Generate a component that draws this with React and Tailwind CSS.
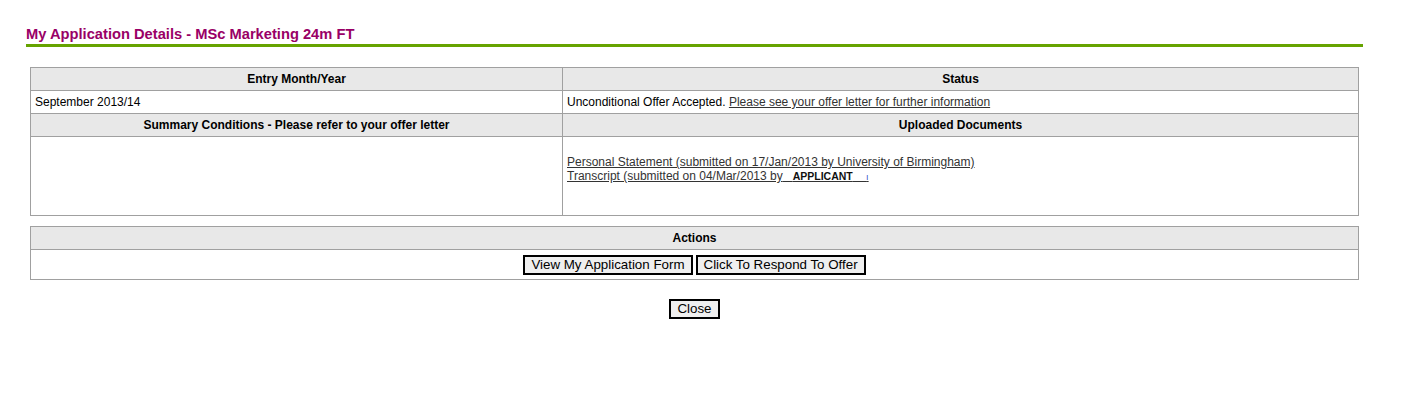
import React from 'react';

const cell = 'border border-[#a0a0a0] px-1 py-1 leading-[14px]';
const head = `${cell} bg-[#e8e8e8] font-bold text-center`;
const btn =
  'border-2 border-black bg-[#efefef] px-[6px] leading-[16px] text-[13.33px] text-black';

const App = () => {
  return (
    <div className="min-h-screen bg-white text-black text-[12px] font-['Liberation_Sans',Arial,sans-serif]">
      <div className="pt-[26px] pl-[26px]">
        <h1 className="w-[1337px] text-[14.7px] leading-[16px] font-bold text-[#990066] pb-[2px] border-b-[3px] border-[#66a300]">
          My Application Details - MSc Marketing 24m FT
        </h1>
      </div>

      <div className="ml-[30px] w-[1329px]">
        <table className="mt-[20px] w-full border-collapse">
          <tbody>
            <tr>
              <th className={`${head} w-[532px]`}>Entry Month/Year</th>
              <th className={head}>Status</th>
            </tr>
            <tr>
              <td className={cell}>September 2013/14</td>
              <td className={cell}>
                Unconditional Offer Accepted.{' '}
                <a href="#" className="text-[#333] underline">
                  Please see your offer letter for further information
                </a>
              </td>
            </tr>
            <tr>
              <th className={head}>Summary Conditions - Please refer to your offer letter</th>
              <th className={head}>Uploaded Documents</th>
            </tr>
            <tr>
              <td className={`${cell} h-[79px]`}></td>
              <td className={`${cell} h-[79px] align-top pt-[18px]`}>
                <a href="#" className="text-[#333] underline">
                  Personal Statement (submitted on 17/Jan/2013 by University of Birmingham)
                </a>
                <br />
                <a href="#" className="text-[#333] underline whitespace-pre">
                  Transcript (submitted on 04/Mar/2013 by{'   '}
                  <span className="font-bold text-[10.5px] text-[#111]">APPLICANT</span>
                  {'    '}
                  <span className="text-[#3355cc] text-[9px]">ı</span>
                </a>
              </td>
            </tr>
          </tbody>
        </table>

        <table className="mt-[10px] w-full border-collapse">
          <tbody>
            <tr>
              <th className={head}>Actions</th>
            </tr>
            <tr>
              <td className={`${cell} text-center h-[30px] py-0`}>
                <div className="flex justify-center gap-[3px]">
                  <button className={btn}>View My Application Form</button>
                  <button className={btn}>Click To Respond To Offer</button>
                </div>
              </td>
            </tr>
          </tbody>
        </table>

        <div className="flex justify-center mt-[19px]">
          <button className={btn}>Close</button>
        </div>
      </div>
    </div>
  );
};

export default App;
